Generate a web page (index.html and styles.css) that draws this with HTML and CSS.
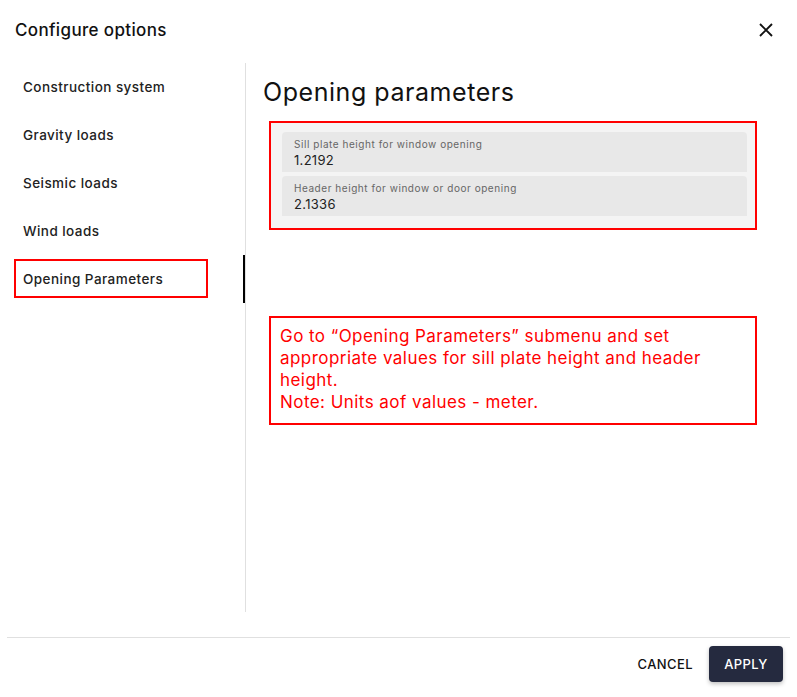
FILE: index.html
```html
<!DOCTYPE html>
<html>
<head>
<meta charset="utf-8">
<link rel="stylesheet" href="styles.css">
</head>
<body>
<div class="dialog">
  <header class="head">
    <h1 class="title">Configure options</h1>
    <button class="close" aria-label="Close">
      <svg width="14" height="14" viewBox="0 0 14 14"><path d="M1 1 L13 13 M13 1 L1 13" stroke="#111" stroke-width="1.9" fill="none"/></svg>
    </button>
  </header>
  <div class="main">
    <nav class="nav">
      <div class="nav-item">Construction system</div>
      <div class="nav-item">Gravity loads</div>
      <div class="nav-item">Seismic loads</div>
      <div class="nav-item">Wind loads</div>
      <div class="nav-item active">Opening Parameters<span class="mark"></span></div>
    </nav>
    <section class="content">
      <h2 class="heading">Opening parameters</h2>
      <div class="fields">
        <div class="field">
          <div class="label">Sill plate height for window opening</div>
          <div class="value">1.2192</div>
        </div>
        <div class="field">
          <div class="label">Header height for window or door opening</div>
          <div class="value">2.1336</div>
        </div>
      </div>
      <div class="note">Go to “Opening Parameters” submenu and set appropriate values for sill plate height and header height.<br>Note: Units aof values - meter.</div>
    </section>
  </div>
  <div class="divider"></div>
  <footer class="foot">
    <button class="btn cancel">CANCEL</button>
    <button class="btn apply">APPLY</button>
  </footer>
</div>
</body>
</html>
```
FILE: styles.css
```css
*, *::before, *::after { box-sizing: border-box; }
html, body { margin: 0; padding: 0; background: #fff; }
body { font-family: "Inter", "Noto Sans", sans-serif; color: #1a1a1a; width: 797px; height: 697px; overflow: hidden; }
.dialog { display: flex; flex-direction: column; height: 697px; }
.head { height: 63px; display: flex; align-items: center; justify-content: space-between; padding: 0 24px 0 15px; }
.title { margin: 0; font-size: 17px; font-weight: 500; color: #111; letter-spacing: 0.35px; position: relative; top: -2px; }
.close { border: 0; background: none; padding: 0; width: 14px; height: 14px; display: flex; cursor: pointer; position: relative; top: -2px; }
.main { height: 549px; display: flex; }
.nav { width: 246px; border-right: 1px solid #e0e0e0; display: flex; flex-direction: column; }
.nav-item { height: 48px; display: flex; align-items: center; padding-left: 23px; font-size: 13.5px; font-weight: 500; color: #222; letter-spacing: 0.45px; position: relative; }
.nav-item.active::before { content: ""; position: absolute; left: 14px; top: 4px; width: 194px; height: 39px; border: 2px solid #ff0000; }
.mark { position: absolute; right: 0; top: 0; width: 2px; height: 48px; background: #000; }
.content { flex: 1; padding: 13px 0 0 17px; display: flex; flex-direction: column; }
.heading { margin: 0; font-size: 25px; font-weight: 400; line-height: 32px; color: #111; letter-spacing: 0.55px; }
.fields { margin: 13px 0 0 6px; width: 488px; border: 2px solid #ff0000; background: #f4f4f4; padding: 9px 8px 12px 11px; display: flex; flex-direction: column; gap: 4px; }
.field { height: 40px; background: #e8e8e8; border-radius: 4px 4px 0 0; padding: 6px 12px 0 12px; }
.label { font-size: 10px; line-height: 13px; color: #666; letter-spacing: 0.55px; }
.value { font-size: 13px; line-height: 18px; color: #222; letter-spacing: 0.3px; }
.note { margin: 86px 0 0 6px; width: 488px; height: 109px; border: 2px solid #ff0000; padding: 7px 10px 0 9px; color: #ff0000; font-size: 17px; line-height: 22px; letter-spacing: 0.45px; }
.divider { margin: 25px 7px 0 7px; height: 1px; background: #e0e0e0; }
.foot { flex: 1; display: flex; justify-content: flex-end; align-items: flex-start; padding: 8px 14px 0 0; gap: 16px; }
.btn { font-family: "Inter", "Noto Sans", sans-serif; border: 0; height: 36px; font-size: 13px; font-weight: 500; letter-spacing: 0.4px; cursor: pointer; border-radius: 4px; }
.cancel { background: none; color: #111; padding: 0; }
.apply { width: 74px; background: #252a3f; color: #fff; box-shadow: 0 2px 4px rgba(0,0,0,0.25); }
```
